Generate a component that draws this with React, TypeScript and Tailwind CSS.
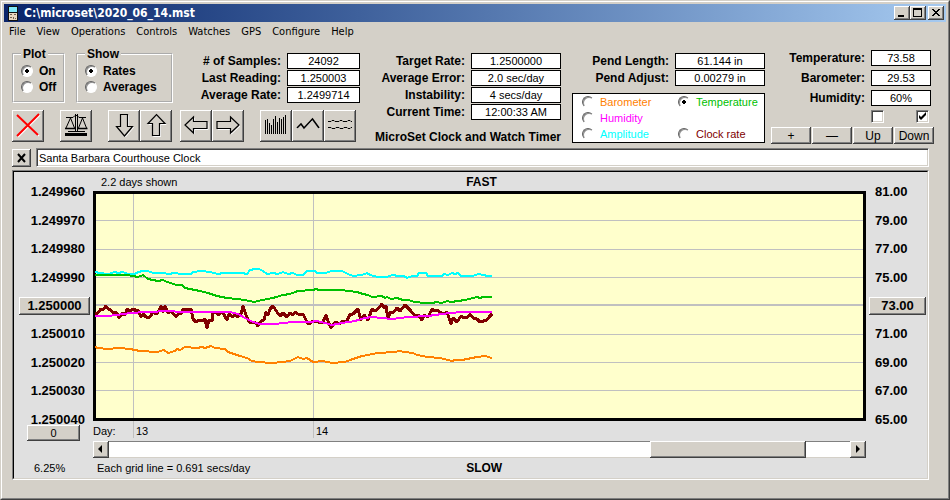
import { useId, useState, type ReactNode } from 'react';

const RAISED =
  'bg-[#d4d0c8] shadow-[inset_-1px_-1px_#404040,inset_1px_1px_#fff,inset_-2px_-2px_#808080]';

const MENU = ['File', 'View', 'Operations', 'Controls', 'Watches', 'GPS', 'Configure', 'Help'];

const RATE_AXIS = [
  '1.249960', '1.249970', '1.249980', '1.249990', '1.250000',
  '1.250010', '1.250020', '1.250030', '1.250040',
];
const TEMP_AXIS = ['81.00', '79.00', '77.00', '75.00', '73.00', '71.00', '69.00', '67.00', '65.00'];
const CENTER_ROW = 4;

const GRID_Y = [26, 55, 83, 140, 168, 196];
const DAY_X = [37, 217];

const SERIES = [
  {
    name: 'Amplitude',
    color: '#00ffff',
    width: 2,
    points:
      '-1,78 4,79 12,80 19,78 22,79 27,78 32,80 39,80 42,78 47,77 52,77 57,79 66,79 74,80 77,79 86,80 95,80 97,78 106,77 114,78 122,80 127,79 146,79 151,80 154,76 159,75 163,75 167,77 171,80 177,79 182,80 187,78 192,80 197,79 201,81 207,81 211,77 219,77 221,79 229,79 236,77 246,77 252,80 257,82 266,81 271,79 274,81 282,83 291,83 296,81 303,82 308,82 311,84 316,82 321,82 323,79 330,79 332,82 346,82 348,80 352,81 356,79 359,80 362,79 365,82 369,82 376,82 383,80 387,81 392,82 396,82',
  },
  {
    name: 'Temperature',
    color: '#00c000',
    width: 2,
    points:
      '-1,81 16,81 31,81 37,82 42,83 47,81 52,85 62,87 67,86 71,88 81,91 86,91 89,94 104,97 112,99 121,102 131,104 149,106 158,108 162,107 171,105 177,104 187,101 194,100 202,97 217,96 220,95 223,96 246,96 252,97 261,98 267,100 272,101 276,103 286,102 289,104 291,103 295,105 301,104 307,106 312,106 319,108 329,109 337,109 340,108 346,109 351,107 355,108 369,106 377,104 381,103 384,104 387,103 396,103',
  },
  {
    name: 'Clock rate',
    color: '#800000',
    width: 3,
    points:
      '-1,119 2,119 5,115 7,116 10,112 12,115 15,116 17,119 19,118 21,119 23,124 27,119 29,121 31,115 34,118 36,115 39,115 40,118 42,116 45,123 47,120 50,123 54,123 57,118 60,120 62,118 65,112 67,118 69,112 72,119 75,117 77,119 80,123 83,119 86,119 87,115 95,115 97,125 100,128 103,126 106,127 109,125 111,134 113,126 116,127 117,118 121,118 122,121 125,118 127,119 131,126 133,120 137,123 139,120 141,123 145,120 147,112 150,121 153,128 157,129 159,128 162,132 165,127 168,126 170,118 172,121 174,115 177,112 181,118 184,122 187,119 191,123 194,119 197,121 199,118 202,120 207,120 211,128 213,130 217,127 222,128 227,128 230,121 232,127 235,134 238,129 240,128 243,130 247,127 251,127 254,120 257,120 262,115 265,126 268,121 272,126 276,115 279,117 282,115 286,110 288,114 290,112 292,125 294,118 297,119 301,114 304,117 309,111 314,116 319,122 322,121 326,126 328,121 332,123 336,115 338,117 341,116 344,118 347,120 351,118 355,130 357,124 361,128 365,122 368,124 372,123 374,120 377,124 381,125 384,128 391,126 393,123 396,120',
  },
  {
    name: 'Humidity',
    color: '#ff00ff',
    width: 2,
    points:
      '-1,122 11,122 21,121 34,119 51,118 74,117 84,118 104,118 134,118 142,120 149,124 157,128 164,130 179,130 196,128 214,128 221,127 229,129 236,131 246,129 259,127 269,124 276,123 286,124 296,125 312,123 332,122 346,120 354,119 366,118 396,118',
  },
  {
    name: 'Barometer',
    color: '#ff8000',
    width: 2,
    points:
      '-1,153 2,154 11,155 24,154 34,155 44,157 61,158 68,156 72,159 79,157 81,155 84,156 89,153 101,154 106,153 109,154 115,152 119,154 129,155 132,158 144,162 151,164 156,167 162,168 176,169 186,168 194,167 198,165 202,163 207,165 211,164 217,168 227,167 236,169 249,168 257,165 266,162 272,161 281,159 299,158 303,157 309,158 317,159 321,161 332,163 344,164 356,167 359,166 366,166 371,165 381,163 389,162 396,164',
  },
];

function Stat({ label, value, wide }: { label: string; value: string; wide: string }) {
  const id = useId();
  return (
    <div className="flex h-4 items-center justify-end gap-1.5">
      <label htmlFor={id} className="whitespace-nowrap text-xs leading-4 font-bold">
        {label}
      </label>
      <output
        id={id}
        className={`h-4 border border-black bg-white text-center text-[11px] leading-[14px] ${wide}`}
      >
        {value}
      </output>
    </div>
  );
}

function Radio(props: {
  name: string;
  label: string;
  checked: boolean;
  onChange: () => void;
  className?: string;
}) {
  return (
    <label className={`flex h-4 items-center gap-1.5 leading-4 ${props.className ?? ''}`}>
      <input
        type="radio"
        name={props.name}
        checked={props.checked}
        onChange={props.onChange}
        className="size-3 shrink-0 appearance-none rounded-full border border-t-[#606060] border-r-white border-b-white border-l-[#606060] bg-white shadow-[inset_1px_1px_#909090] checked:bg-[radial-gradient(circle,#000_0_2px,transparent_2px)]"
      />
      {props.label}
    </label>
  );
}

function Group({ title, width, children }: { title: string; width: string; children: ReactNode }) {
  return (
    <fieldset
      className={`h-14 border-2 border-white pt-0.5 pl-[7px] text-xs font-bold [border-style:groove] ${width}`}
    >
      <legend className="h-3.5 px-0.5 leading-[14px]">{title}</legend>
      {children}
    </fieldset>
  );
}

function Tool({ label, children, className }: { label: string; children: ReactNode; className?: string }) {
  return (
    <button type="button" aria-label={label} className={`size-8 ${RAISED} ${className ?? ''}`}>
      <svg viewBox="0 0 32 32" className="size-8" fill="none" stroke="#000">
        {children}
      </svg>
    </button>
  );
}

function Arrow({ d }: { d: string }) {
  return (
    <>
      <path d={d} transform="translate(1 1)" stroke="#fff" />
      <path d={d} fill="#d4d0c8" strokeWidth="1.2" />
    </>
  );
}

function CaptionButton({ label, children, className }: { label: string; children: ReactNode; className?: string }) {
  return (
    <button type="button" aria-label={label} className={`h-3.5 w-4 ${RAISED} ${className ?? ''}`}>
      <svg viewBox="0 0 16 14" className="h-3.5 w-4" fill="none" stroke="#000" shapeRendering="crispEdges">
        {children}
      </svg>
    </button>
  );
}

function Check({ label, defaultChecked }: { label: string; defaultChecked?: boolean }) {
  return (
    <label className="grid size-[13px]">
      <input
        type="checkbox"
        aria-label={label}
        defaultChecked={defaultChecked}
        className="peer col-start-1 row-start-1 size-[13px] appearance-none border border-t-[#808080] border-r-white border-b-white border-l-[#808080] bg-white shadow-[inset_1px_1px_#404040,inset_-1px_-1px_#d4d0c8]"
      />
      <svg
        viewBox="0 0 13 13"
        className="pointer-events-none col-start-1 row-start-1 hidden size-[13px] peer-checked:block"
      >
        <path d="M3 5l2 2 5-5v3l-5 5-2-2z" fill="#000" />
      </svg>
    </label>
  );
}

function Axis({ values, side }: { values: string[]; side: 'left' | 'right' }) {
  const left = side === 'left';
  return (
    <div
      className={`grid h-64 grid-rows-9 items-center text-[13px] leading-4 font-bold ${left ? 'justify-items-end' : 'justify-items-start'}`}
    >
      {values.map((v, i) =>
        i === CENTER_ROW ? (
          <button
            key={v}
            type="button"
            className={`h-[18px] text-center ${RAISED} ${left ? 'mr-[3px] w-[71px]' : 'ml-[3px] w-[57px]'}`}
          >
            {v}
          </button>
        ) : (
          <span key={v} className={left ? 'mr-2' : 'ml-[9px]'}>
            {v}
          </span>
        ),
      )}
    </div>
  );
}

function Plot() {
  return (
    <div className="h-[230px] border-[3px] border-black bg-[#ffffcc]">
      <svg
        className="block h-full w-full overflow-visible"
        role="img"
        aria-label="Rate and sensor history"
        shapeRendering="crispEdges"
      >
        <g fill="#c0c0c0">
          {GRID_Y.map((y) => (
            <rect key={y} x="0" y={y} width="100%" height="1" />
          ))}
          <rect x="0" y="110" width="100%" height="2" />
          {DAY_X.map((x) => (
            <rect key={x} x={x} y="0" width="1" height="100%" />
          ))}
        </g>
        {SERIES.map((s) => (
          <polyline
            key={s.name}
            points={s.points}
            fill="none"
            stroke={s.color}
            strokeWidth={s.width}
            strokeLinejoin="round"
          />
        ))}
      </svg>
    </div>
  );
}

export default function App() {
  const [plot, setPlot] = useState('On');
  const [show, setShow] = useState('Rates');
  const [scale, setScale] = useState('Temperature');

  return (
    <div className="border border-t-[#d4d0c8] border-r-[#404040] border-b-[#404040] border-l-[#d4d0c8] bg-[#d4d0c8] font-['Liberation_Sans',sans-serif] text-[11px] text-black">
      <div className="border border-t-white border-r-[#808080] border-b-[#808080] border-l-white pb-[18px]">
        <header className="mx-0.5 mt-0.5 flex h-[18px] items-center bg-linear-to-r from-[#0a246a] to-[#a6caf0] pr-0.5 pl-1">
          <svg viewBox="0 0 10 15" className="h-[15px] w-2.5" shapeRendering="crispEdges">
            <rect width="10" height="15" fill="#101010" />
            <rect x="1" y="1" width="8" height="5" fill="#80e8f8" />
            <rect x="1" y="7" width="8" height="7" fill="#e8d8c0" />
            <path d="M2 8h2v1H2zM6 8h2v1H6zM2 11h2v1H2zM5 11h1v2H5zM7 12h1v1H7z" fill="#706050" />
          </svg>
          <h1 className="ml-1.5 flex-1 font-['DejaVu_Sans_Condensed','Noto_Sans',sans-serif] text-xs leading-4 font-bold text-white">
            C:\microset\2020_06_14.mst
          </h1>
          <CaptionButton label="Minimize">
            <path d="M4 10h6" strokeWidth="2" />
          </CaptionButton>
          <CaptionButton label="Maximize">
            <path d="M3 3h9" strokeWidth="2" />
            <path d="M3.500 3v7.500h8v-7.500" />
          </CaptionButton>
          <CaptionButton label="Close" className="ml-0.5">
            <path d="M4 3l7 7M5 3l7 7M11 3l-7 7M12 3l-7 7" />
          </CaptionButton>
        </header>

        <nav className="flex h-5 items-center gap-[11px] pl-[7px] font-['DejaVu_Sans_Condensed','Noto_Sans',sans-serif] text-[11px] leading-4">
          {MENU.map((m) => (
            <button key={m} type="button">
              {m}
            </button>
          ))}
        </nav>

        <section className="flex items-start pr-3.5 pb-[3px] pl-2.5">
          <div className="w-[348px] pt-[5px]">
            <div className="flex items-start">
              <Group title="Plot" width="w-[53px]">
                {['On', 'Off'].map((o) => (
                  <Radio key={o} name="plot" label={o} checked={plot === o} onChange={() => setPlot(o)} />
                ))}
              </Group>
              <div className="ml-[11px]">
                <Group title="Show" width="w-[97px]">
                  {['Rates', 'Averages'].map((o) => (
                    <Radio key={o} name="show" label={o} checked={show === o} onChange={() => setShow(o)} />
                  ))}
                </Group>
              </div>
              <div className="ml-auto flex flex-col gap-px pt-1.5">
                <Stat label="# of Samples:" value="24092" wide="w-[73px]" />
                <Stat label="Last Reading:" value="1.250003" wide="w-[73px]" />
                <Stat label="Average Rate:" value="1.2499714" wide="w-[73px]" />
              </div>
            </div>

            <div className="mt-[7px] flex">
              <Tool label="Stop">
                <path d="M6 6l21 20M28 5L6 27" stroke="#fff" strokeWidth="1.5" />
                <path d="M5 5l21 20M27 4L5 26" stroke="#f00" strokeWidth="2" />
              </Tool>
              <Tool label="Calibrate" className="ml-4">
                <path d="M6 7.500h7l2-2h2l2 2h7" />
                <path d="M15.500 4v17M17.500 4v17" />
                <path d="M10.500 8L6 18M10.500 8l4 10M22.500 8l-4 10M22.500 8l4 10" />
                <path d="M5 18.500h10M18 18.500h9.500" strokeWidth="1.5" />
                <path d="M8 21.500h17" />
                <path d="M5 24.500h22" strokeWidth="3" />
              </Tool>
              <Tool label="Move down" className="ml-4">
                <Arrow d="M12.500 4.500h7v12h5L16.500 26l-8-9.500h4z" />
              </Tool>
              <Tool label="Move up">
                <Arrow d="M12.500 25.500h7v-12h5.500L16.500 4.500L8 13.500h4.500z" />
              </Tool>
              <Tool label="Move left" className="ml-2">
                <Arrow d="M27 11.500v7H13.500v4.500L5 15l8.500-8v4.500z" />
              </Tool>
              <Tool label="Move right">
                <Arrow d="M5 11.500v7h13.500v4.500L27 15l-8.500-8v4.500z" />
              </Tool>
              <Tool label="Bar graph" className="ml-4">
                <path
                  d="M5.500 10v14M7.500 9v15M9.500 13v11M11.500 15v9M13.500 9v15M15.500 6v18M17.500 12v12M19.500 8v16M21.500 9v15M23.500 7v17M25.500 5v19"
                  shapeRendering="crispEdges"
                />
              </Tool>
              <Tool label="Line graph">
                <path d="M5 19l4-4 3 4 9-9 6 9" stroke="#fff" />
                <path d="M5 18l4-4 3 4 8.500-9 6.500 9" strokeWidth="1.6" />
              </Tool>
              <Tool label="Two traces">
                <path d="M4 11.500h3l1-1h2l1 1h4l1-1h2l1 1h4l1-1h2l1 1h1M4 17.500h3l1 1h3l1-1h3l1 1h3l1-1h3l1 1h2l1-1h1" />
              </Tool>
            </div>
          </div>

          <div className="ml-3.5 w-[187px] pt-[11px]">
            <div className="flex flex-col gap-px">
              <Stat label="Target Rate:" value="1.2500000" wide="w-[90px]" />
              <Stat label="Average Error:" value="2.0 sec/day" wide="w-[90px]" />
              <Stat label="Instability:" value="4 secs/day" wide="w-[90px]" />
              <Stat label="Current Time:" value="12:00:33 AM" wide="w-[90px]" />
            </div>
            <p className="mt-[9px] text-right text-xs leading-4 font-bold whitespace-nowrap">
              MicroSet Clock and Watch Timer
            </p>
          </div>

          <div className="ml-[11px] w-[193px] pt-[11px]">
            <div className="flex flex-col gap-px">
              <Stat label="Pend Length:" value="61.144 in" wide="w-[90px]" />
              <Stat label="Pend Adjust:" value="0.00279 in" wide="w-[90px]" />
            </div>
            <div className="mt-[7px] grid grid-cols-[96px_1fr] border border-black bg-white pl-[9px]">
              <Radio
                name="scale"
                label="Barometer"
                checked={scale === 'Barometer'}
                onChange={() => setScale('Barometer')}
                className="text-[#ff8000]"
              />
              <Radio
                name="scale"
                label="Temperature"
                checked={scale === 'Temperature'}
                onChange={() => setScale('Temperature')}
                className="text-[#00c000]"
              />
              <Radio
                name="scale"
                label="Humidity"
                checked={scale === 'Humidity'}
                onChange={() => setScale('Humidity')}
                className="col-span-2 text-[#ff00ff]"
              />
              <Radio
                name="scale"
                label="Amplitude"
                checked={scale === 'Amplitude'}
                onChange={() => setScale('Amplitude')}
                className="text-[#00ffff]"
              />
              <Radio
                name="scale"
                label="Clock rate"
                checked={scale === 'Clock rate'}
                onChange={() => setScale('Clock rate')}
                className="text-[#800000]"
              />
            </div>
          </div>

          <div className="ml-auto pt-2">
            <div className="flex flex-col gap-1 pr-[3px]">
              <Stat label="Temperature:" value="73.58" wide="w-[60px]" />
              <Stat label="Barometer:" value="29.53" wide="w-[60px]" />
              <Stat label="Humidity:" value="60%" wide="w-[60px]" />
              <div className="flex w-[60px] justify-between self-end pr-0.5">
                <Check label="Lock low limit" />
                <Check label="Lock high limit" defaultChecked />
              </div>
            </div>
            <div className="mt-1 flex gap-px">
              {['+', '—', 'Up', 'Down'].map((b) => (
                <button key={b} type="button" className={`h-[17px] w-10 text-xs leading-4 ${RAISED}`}>
                  {b}
                </button>
              ))}
            </div>
          </div>
        </section>

        <div className="flex items-end gap-[5px] pr-[19px] pl-2.5">
          <button type="button" aria-label="Clear note" className={`h-[18px] w-[19px] ${RAISED}`}>
            <svg viewBox="0 0 19 18" className="h-[18px] w-[19px]" stroke="#000" strokeWidth="2">
              <path d="M6 5l7 8M13 5l-7 8" />
            </svg>
          </button>
          <input
            type="text"
            aria-label="Note"
            defaultValue="Santa Barbara Courthouse Clock"
            className="h-[19px] min-w-0 flex-1 border border-t-[#808080] border-r-white border-b-white border-l-[#808080] bg-white px-0.5 shadow-[inset_1px_1px_#404040,inset_-1px_-1px_#d4d0c8]"
          />
        </div>

        <main className="mt-[3px] mr-[19px] ml-2.5 border border-t-[#808080] border-r-white border-b-white border-l-[#808080]">
          <div className="grid grid-cols-[79px_1fr_61px] border border-t-black border-r-[#d4d0c8] border-b-[#d4d0c8] border-l-black bg-[#e0e0e0]">
            <div className="flex flex-col pt-1.5">
              <Axis values={RATE_AXIS} side="left" />
              <button type="button" className={`-mt-[9px] ml-[13px] h-4 w-[53px] leading-4 ${RAISED}`}>
                0
              </button>
              <span className="mt-auto pl-5 leading-5">6.25%</span>
            </div>

            <div>
              <div className="grid h-[19px] grid-cols-[14fr_15fr] items-center leading-4">
                <span className="pl-2">2.2 days shown</span>
                <strong className="text-xs leading-4">FAST</strong>
              </div>
              <Plot />
              <div className="flex h-[17px] leading-5">
                <span className="w-10">Day:</span>
                <span className="w-[180px] border-l border-[#c0c0c0] pl-0.5">13</span>
                <span className="border-l border-[#c0c0c0] pl-0.5">14</span>
              </div>
              <div className="mt-[3px] flex h-[17px]">
                <button type="button" aria-label="Scroll left" className={`w-4 ${RAISED}`}>
                  <svg viewBox="0 0 16 17" className="h-[17px] w-4">
                    <path d="M9 4v8L5 8z" />
                  </svg>
                </button>
                <div className="flex flex-1 border-y border-t-[#808080] border-b-[#d4d0c8] bg-white">
                  <div className="w-[73%]" />
                  <div className={`-my-px w-[21%] ${RAISED}`} />
                </div>
                <button type="button" aria-label="Scroll right" className={`w-4 ${RAISED}`}>
                  <svg viewBox="0 0 16 17" className="h-[17px] w-4">
                    <path d="M6 4v8l4-4z" />
                  </svg>
                </button>
              </div>
              <div className="grid h-5 grid-cols-[14fr_15fr] items-center leading-4">
                <span className="pl-1">Each grid line = 0.691 secs/day</span>
                <strong className="text-xs leading-4">SLOW</strong>
              </div>
            </div>

            <div className="pt-1.5">
              <Axis values={TEMP_AXIS} side="right" />
            </div>
          </div>
        </main>
      </div>
    </div>
  );
}
